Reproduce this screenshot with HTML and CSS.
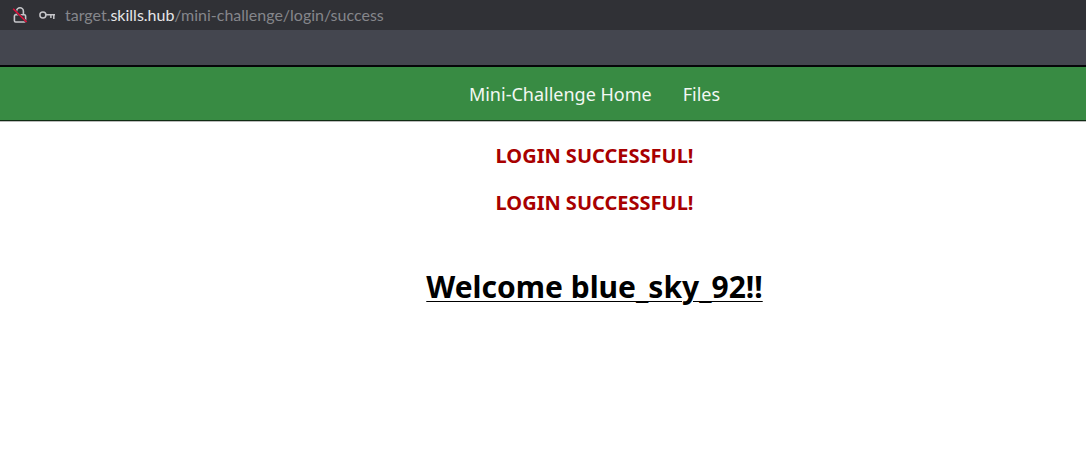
FILE: index.html
```html
<!DOCTYPE html>
<html lang="en">
<head>
<meta charset="utf-8">
<title>Mini-Challenge</title>
<link rel="stylesheet" href="styles.css">
</head>
<body>
<header class="address-bar">
  <svg class="icon lock" viewBox="0 0 16 18" aria-hidden="true">
    <path d="M4.6 8.5V5.2a3.4 3.4 0 0 1 6.8 0v3.3" fill="none" stroke="#c6c6ca" stroke-width="1.6"/>
    <rect x="2.4" y="8.8" width="11.2" height="7.2" rx="1.2" fill="none" stroke="#c6c6ca" stroke-width="1.6"/>
    <path d="M1.2 2.8L14.6 16" stroke="#303136" stroke-width="2.4"/>
    <path d="M1.2 2.8L14.6 16" stroke="#e0103c" stroke-width="1.6"/>
  </svg>
  <svg class="icon key" viewBox="0 0 18 18" aria-hidden="true">
    <g fill="none" stroke="#c6c6ca" stroke-width="1.5">
      <circle cx="4.9" cy="9" r="3"/>
      <path d="M7.9 8.8H17M12.9 9v3M15.8 9v4"/>
    </g>
  </svg>
  <span class="url">target.<span class="domain">skills.hub</span>/mini-challenge/login/success</span>
</header>
<div class="toolbar"></div>
<nav class="nav">
  <a href="#">Mini-Challenge Home</a>
  <a href="#">Files</a>
</nav>
<main class="content">
  <p class="message">LOGIN SUCCESSFUL!</p>
  <p class="message">LOGIN SUCCESSFUL!</p>
  <h1 class="welcome">Welcome blue_sky_92!!</h1>
</main>
</body>
</html>
```
FILE: styles.css
```css
body {
  margin: 0;
  background: #fff;
  color: #000;
  font-family: "Noto Sans", sans-serif;
}
.address-bar {
  display: flex;
  align-items: center;
  height: 30px;
  padding-left: 12px;
  background: #303136;
}
.icon { display: block; height: 18px; }
.lock { width: 16px; }
.key { width: 18px; margin-left: 10px; }
.url {
  margin-left: 9px;
  color: #85868b;
  font-family: Lato, "Noto Sans", sans-serif;
  font-size: 16px;
  line-height: 20px;
}
.domain { color: #e6e6e8; }
.toolbar {
  height: 35px;
  background: #44464f;
  border-bottom: 2px solid #050508;
}
.nav {
  display: flex;
  justify-content: center;
  gap: 31px;
  padding: 15px 0 13px 103px;
  background: #388b43;
  border-bottom: 1px solid #102c14;
}
.nav a {
  color: #f3f8f3;
  font-size: 18px;
  line-height: 25px;
  text-decoration: none;
}
.content {
  padding: 20px 0 0 103px;
  border-top: 1px solid #bbb;
  text-align: center;
}
.message {
  margin: 0 0 20px;
  color: #a80000;
  font-size: 20px;
  font-weight: 700;
  line-height: 27px;
}
.welcome {
  margin: 51px 0 0;
  font-size: 30px;
  font-weight: 700;
  line-height: 40px;
  text-decoration: underline;
  text-decoration-thickness: 1px;
  text-underline-offset: 3px;
}
```
